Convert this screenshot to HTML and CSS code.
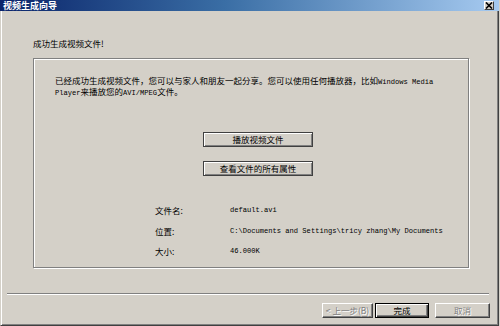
FILE: index.html
```html
<!DOCTYPE html>
<html lang="zh-CN">
<head>
    <meta charset="UTF-8">
    <title>视频生成向导</title>
    <link rel="stylesheet" href="styles.css">
</head>
<body>
    <div class="window">
        <div class="titlebar">
            <span class="title">视频生成向导</span>
            <span class="close-btn">
                <svg width="8" height="7" viewBox="0 0 8 7">
                    <path d="M1 0.5 L7 6.5 M7 0.5 L1 6.5" stroke="#000" stroke-width="1.6"/>
                </svg>
            </span>
        </div>
        <div class="body">
            <div class="heading">成功生成视频文件!</div>
            <div class="groupbox">
                <p class="intro">已经成功生成视频文件，您可以与家人和朋友一起分享。您可以使用任何播放器，比如<span class="en">Windows Media</span><br><span class="en">Player</span>来播放您的<span class="en">AVI/MPEG</span>文件。</p>
                <div class="actions">
                    <button class="btn wide">播放视频文件</button>
                    <button class="btn wide">查看文件的所有属性</button>
                </div>
                <div class="info">
                    <span class="label">文件名:</span><span class="value en">default.avi</span>
                    <span class="label">位置:</span><span class="value en">C:\Documents and Settings\tricy zhang\My Documents</span>
                    <span class="label">大小:</span><span class="value en">46.000K</span>
                </div>
            </div>
        </div>
        <div class="footer">
            <div class="separator"></div>
            <div class="buttons">
                <button class="btn disabled back">&lt; 上一步(B)</button>
                <button class="btn default finish">完成</button>
                <button class="btn disabled cancel">取消</button>
            </div>
        </div>
    </div>
</body>
</html>
```

FILE: styles.css
```css
/* Stile generale */
body {
    margin: 0;
    padding: 0;
    background: #d4d0c8;
    font-family: "Noto Sans CJK SC", "Liberation Sans", sans-serif;
    font-size: 8.5px;
    color: #000;
}

.window {
    width: 499px;
    height: 326px;
    box-sizing: border-box;
    background: #d4d0c8;
    border-left: 1px solid #d4d0c8;
    border-right: 1px solid #404040;
    border-bottom: 1px solid #404040;
    box-shadow: inset 1px 0 #fff, inset -1px -1px #808080;
    display: flex;
    flex-direction: column;
}

.titlebar {
    height: 11px;
    margin-left: -1px;
    margin-right: -1px;
    background: linear-gradient(to right, #0a246a, #3a6ea5 45%, #a6caf0);
    display: flex;
    align-items: center;
    justify-content: space-between;
    padding: 0 5px 0 3px;
}

.title {
    color: #fff;
    font-weight: bold;
    font-size: 9px;
    line-height: 11px;
}

.close-btn {
    width: 10px;
    height: 9px;
    box-sizing: border-box;
    background: #d4d0c8;
    border: 1px solid;
    border-color: #fff #404040 #404040 #fff;
    display: flex;
    align-items: center;
    justify-content: center;
}

.body {
    padding: 27px 0 0 32px;
}

.heading {
    line-height: 10px;
    height: 10px;
}

.groupbox {
    margin-top: 10px;
    width: 436px;
    height: 210px;
    border: 1px solid #808080;
    box-shadow: 1px 1px #fff, inset 1px 1px #fff;
    padding: 17px 0 0 21px;
    box-sizing: border-box;
}

.intro {
    margin: 0;
    line-height: 9px;
}

.en {
    font-family: "Liberation Mono", monospace;
    font-size: 7.1px;
}

.actions {
    margin-top: 34px;
    padding-left: 148px;
    display: flex;
    flex-direction: column;
    gap: 14px;
}

.btn {
    font-family: inherit;
    font-size: 8.5px;
    line-height: 1;
    height: 15px;
    padding: 0;
    margin: 0;
    background: #d4d0c8;
    color: #000;
    border: 1px solid;
    border-color: #fff #404040 #404040 #fff;
    box-shadow: inset -1px -1px #808080;
}

.btn.wide {
    width: 110px;
    border-color: #404040;
    box-shadow: inset 1px 1px #fff, inset -1px -1px #808080;
}

.info {
    margin-top: 24px;
    padding-left: 100px;
    display: grid;
    grid-template-columns: 75px auto;
    grid-auto-rows: 20.5px;
    align-items: center;
}

.footer {
    margin-top: auto;
    padding: 0 8px 7px 6px;
}

.separator {
    height: 1px;
    background: #808080;
    border-bottom: 1px solid #fff;
    margin-right: 1px;
}

.buttons {
    margin-top: 8px;
    display: flex;
    justify-content: flex-end;
    gap: 2px;
}

.btn.disabled {
    color: #808080;
    text-shadow: 1px 1px #fff;
}

.back {
    width: 51px;
}

.finish {
    width: 54px;
}

.cancel {
    width: 55px;
    margin-left: 4px;
}

.btn.default {
    border-color: #000;
    box-shadow: inset 1px 1px #fff, inset -1px -1px #404040, inset -2px -2px #808080;
}
```
